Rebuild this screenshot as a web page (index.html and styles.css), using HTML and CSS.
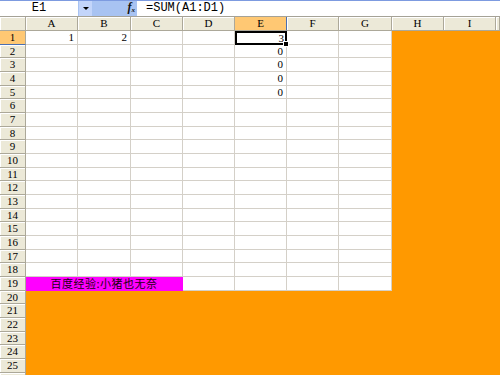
FILE: index.html
```html
<!DOCTYPE html>
<html lang="zh">
<head>
    <meta charset="UTF-8">
    <title>Book1</title>
    <link rel="stylesheet" href="styles.css">
</head>
<body>
    <div class="formula-bar">
        <div class="name-box">E1</div>
        <div class="name-drop"><span class="arrow"></span></div>
        <div class="fx-area"><span class="fx">f<sub>x</sub></span></div>
        <div class="formula">=SUM(A1:D1)</div>
    </div>
    <div class="sheet" id="sheet"></div>
    <script>
        const cols = ["A", "B", "C", "D", "E", "F", "G", "H", "I", "J"];
        const values = { A1: 1, B1: 2, E1: 3, E2: 0, E3: 0, E4: 0, E5: 0 };
        const sheet = document.getElementById("sheet");

        function add(cls, text) {
            const el = document.createElement("div");
            el.className = cls;
            if (text !== undefined) el.textContent = text;
            sheet.appendChild(el);
            return el;
        }

        // J only peeks in at the right edge, so no label for it
        add("corner");
        cols.forEach(c => add(c === "E" ? "col-head active" : "col-head", c === "J" ? "" : c));

        // row 26 is only a sliver at the bottom
        for (let r = 1; r <= 26; r++) {
            add(r === 1 ? "row-head active" : "row-head", r === 26 ? "" : r);
            cols.forEach(c => {
                if (r === 19 && (c === "B" || c === "C")) return;
                if (r === 19 && c === "A") {
                    add("cell merged", "百度经验:小猪也无奈");
                    return;
                }
                let cls = "cell";
                if (r >= 20 || c === "H" || c === "I" || c === "J") cls += " orange";
                if (c + r === "E1") cls += " selected";
                add(cls, values[c + r]);
            });
        }
    </script>
</body>
</html>
```

FILE: styles.css
```css
body {
    margin: 0;
    width: 500px;
    height: 375px;
    overflow: hidden;
    background: #fff;
    font-family: "Liberation Serif", "Noto Sans CJK SC", serif;
    font-size: 11px;
    color: #000;
}

.formula-bar {
    display: flex;
    height: 17px;
    box-sizing: border-box;
    border-top: 1px solid #7d9be0;
    border-bottom: 1px solid #a5a296;
    background: #a8c3f2;
    font-family: "Liberation Mono", monospace;
    font-size: 12px;
}

.name-box {
    width: 78px;
    background: #fff;
    text-align: center;
    line-height: 15px;
}

.name-drop {
    width: 13px;
    margin-left: 1px;
    background: #c3d5fa;
    display: flex;
    align-items: center;
    justify-content: center;
}

.arrow {
    width: 0;
    height: 0;
    border-left: 3px solid transparent;
    border-right: 3px solid transparent;
    border-top: 3px solid #000;
}

.fx-area {
    width: 43px;
    display: flex;
    justify-content: flex-end;
    align-items: center;
    padding-right: 2px;
}

.fx {
    font-family: "Liberation Serif", serif;
    font-style: italic;
    font-weight: bold;
    font-size: 12px;
    line-height: 12px;
    color: #111;
}

.fx sub {
    font-size: 7px;
    vertical-align: -1px;
}

.formula {
    flex: 1;
    background: #fff;
    padding-left: 9px;
    line-height: 15px;
}

.sheet {
    display: grid;
    width: 500px;
    grid-template-columns: 26px 52px 53px 52px 52px 52px 52px 53px 52px 52px 4px;
    grid-template-rows: 14px repeat(8, 14px 13px 14px) 14px 14px;
}

.corner,
.col-head,
.row-head {
    box-sizing: border-box;
    background: #ece9d8;
    border-right: 1px solid #aca899;
    border-bottom: 1px solid #aca899;
    box-shadow: inset 1px 1px 0 #fff;
    text-align: center;
    line-height: 12px;
}

.active {
    background: #ffc873;
    box-shadow: none;
}

.col-head.active {
    border-right-color: #4b6fb0;
}

.row-head.active {
    border-bottom-color: #4b6fb0;
}

.cell {
    box-sizing: border-box;
    border-right: 1px solid #d4d0c8;
    border-bottom: 1px solid #d4d0c8;
    text-align: right;
    padding-right: 3px;
    line-height: 12px;
    white-space: nowrap;
}

.orange {
    background: #ff9900;
    border-color: #ff9900;
}

.merged {
    grid-column: span 3;
    background: #ff00ff;
    border-color: #ff00ff;
    text-align: center;
    padding-right: 0;
    font-family: "Noto Sans CJK SC", sans-serif;
    font-size: 11px;
    letter-spacing: 0.5px;
    line-height: 13px;
    color: #1a0010;
}

.selected {
    position: relative;
    border: 2px solid #000;
    line-height: 10px;
    padding-right: 1px;
}

.selected::after {
    content: "";
    position: absolute;
    right: -4px;
    bottom: -4px;
    width: 4px;
    height: 4px;
    background: #000;
    border: 1px solid #fff;
    z-index: 1;
}
```
